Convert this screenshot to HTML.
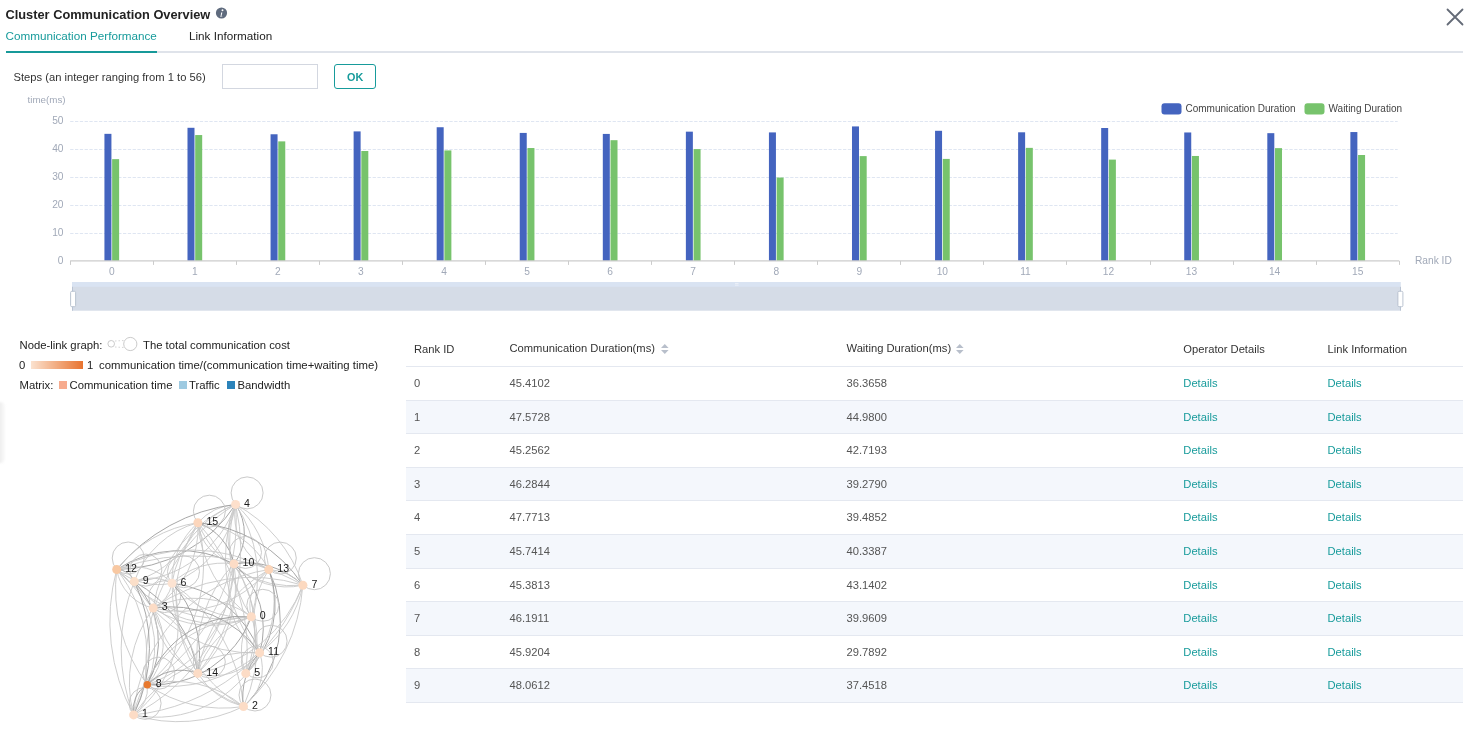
<!DOCTYPE html>
<html><head><meta charset="utf-8"><style>
html,body{margin:0;padding:0;background:#fff;}
body{width:1478px;height:740px;position:relative;overflow:hidden;font-family:'Liberation Sans', sans-serif;}
</style></head><body><div style="position:absolute;left:0;top:0;width:1478px;height:740px;will-change:transform">
<div style="position:absolute;left:5.5px;top:9px;font-size:12.8px;line-height:12.8px;color:#222;font-weight:bold;white-space:nowrap;">Cluster Communication Overview</div>
<svg style="position:absolute;left:215px;top:7px" width="13" height="13" viewBox="0 0 13 13"><circle cx="6.5" cy="6" r="5.6" fill="#5f6b7e"/><circle cx="7.5" cy="3.3" r="0.95" fill="#fff"/><path d="M6.2 5.4 L7.4 5.4 L6.5 9.0 L7.3 9.0 L7.2 9.5 L5.0 9.5 L5.1 9.0 L5.6 9.0 L6.1 6.2 L5.9 6.2 Z" fill="#fff"/></svg>
<div style="position:absolute;left:5.5px;top:30px;font-size:11.7px;line-height:11.7px;color:#179b9b;font-weight:normal;white-space:nowrap;">Communication Performance</div>
<div style="position:absolute;left:189px;top:30px;font-size:11.7px;line-height:11.7px;color:#222;font-weight:normal;white-space:nowrap;">Link Information</div>
<div style="position:absolute;left:6px;top:51px;width:1457px;height:2px;background:#dfe3ea"></div>
<div style="position:absolute;left:6px;top:51px;width:151px;height:2px;background:#179999"></div>
<svg style="position:absolute;left:1446px;top:8px" width="18" height="18" viewBox="0 0 18 18"><path d="M1.5 1.5 L16.5 16.5 M16.5 1.5 L1.5 16.5" stroke="#646b77" stroke-width="1.8" stroke-linecap="round"/></svg>
<div style="position:absolute;left:13.5px;top:72px;font-size:11.2px;line-height:11.2px;color:#333;font-weight:normal;white-space:nowrap;">Steps (an integer ranging from 1 to 56)</div>
<div style="position:absolute;left:222px;top:64px;width:94px;height:23px;border:1px solid #d3d7e0;background:#fff"></div>
<div style="position:absolute;left:334px;top:64px;width:39.5px;height:22.5px;border:1.2px solid #179b9b;border-radius:3px;background:#fff"></div>
<div style="position:absolute;left:347px;top:72px;font-size:10.8px;line-height:10.8px;color:#179b9b;font-weight:bold;white-space:nowrap;">OK</div>
<svg style="position:absolute;left:0;top:0" width="1478" height="330">
<line x1="70.2" y1="233.5" x2="1397.7" y2="233.5" stroke="#dfe6f2" stroke-width="1" stroke-dasharray="3.3,1.5"/>
<line x1="70.2" y1="205.5" x2="1397.7" y2="205.5" stroke="#dfe6f2" stroke-width="1" stroke-dasharray="3.3,1.5"/>
<line x1="70.2" y1="177.5" x2="1397.7" y2="177.5" stroke="#dfe6f2" stroke-width="1" stroke-dasharray="3.3,1.5"/>
<line x1="70.2" y1="149.5" x2="1397.7" y2="149.5" stroke="#dfe6f2" stroke-width="1" stroke-dasharray="3.3,1.5"/>
<line x1="70.2" y1="121.5" x2="1397.7" y2="121.5" stroke="#dfe6f2" stroke-width="1" stroke-dasharray="3.3,1.5"/>
<text x="63.50" y="264" text-anchor="end" font-family="Liberation Sans" font-size="10.2" font-weight="normal" fill="#a1a9b8">0</text>
<text x="63.50" y="236" text-anchor="end" font-family="Liberation Sans" font-size="10.2" font-weight="normal" fill="#a1a9b8">10</text>
<text x="63.50" y="208" text-anchor="end" font-family="Liberation Sans" font-size="10.2" font-weight="normal" fill="#a1a9b8">20</text>
<text x="63.50" y="180" text-anchor="end" font-family="Liberation Sans" font-size="10.2" font-weight="normal" fill="#a1a9b8">30</text>
<text x="63.50" y="152" text-anchor="end" font-family="Liberation Sans" font-size="10.2" font-weight="normal" fill="#a1a9b8">40</text>
<text x="63.50" y="124" text-anchor="end" font-family="Liberation Sans" font-size="10.2" font-weight="normal" fill="#a1a9b8">50</text>
<rect x="104.43" y="133.84" width="7" height="127.06" fill="#4464bf"/>
<rect x="112.13" y="159.15" width="7" height="101.75" fill="#77c36c"/>
<text x="111.73" y="275" text-anchor="middle" font-family="Liberation Sans" font-size="10.2" font-weight="normal" fill="#a1a9b8">0</text>
<rect x="187.49" y="127.79" width="7" height="133.11" fill="#4464bf"/>
<rect x="195.19" y="135.05" width="7" height="125.85" fill="#77c36c"/>
<text x="194.79" y="275" text-anchor="middle" font-family="Liberation Sans" font-size="10.2" font-weight="normal" fill="#a1a9b8">1</text>
<rect x="270.56" y="134.27" width="7" height="126.63" fill="#4464bf"/>
<rect x="278.26" y="141.37" width="7" height="119.53" fill="#77c36c"/>
<text x="277.86" y="275" text-anchor="middle" font-family="Liberation Sans" font-size="10.2" font-weight="normal" fill="#a1a9b8">2</text>
<rect x="353.62" y="131.40" width="7" height="129.50" fill="#4464bf"/>
<rect x="361.32" y="151.00" width="7" height="109.90" fill="#77c36c"/>
<text x="360.92" y="275" text-anchor="middle" font-family="Liberation Sans" font-size="10.2" font-weight="normal" fill="#a1a9b8">3</text>
<rect x="436.68" y="127.24" width="7" height="133.66" fill="#4464bf"/>
<rect x="444.38" y="150.42" width="7" height="110.48" fill="#77c36c"/>
<text x="443.98" y="275" text-anchor="middle" font-family="Liberation Sans" font-size="10.2" font-weight="normal" fill="#a1a9b8">4</text>
<rect x="519.74" y="132.92" width="7" height="127.98" fill="#4464bf"/>
<rect x="527.44" y="148.03" width="7" height="112.87" fill="#77c36c"/>
<text x="527.04" y="275" text-anchor="middle" font-family="Liberation Sans" font-size="10.2" font-weight="normal" fill="#a1a9b8">5</text>
<rect x="602.81" y="133.92" width="7" height="126.98" fill="#4464bf"/>
<rect x="610.51" y="140.19" width="7" height="120.71" fill="#77c36c"/>
<text x="610.11" y="275" text-anchor="middle" font-family="Liberation Sans" font-size="10.2" font-weight="normal" fill="#a1a9b8">6</text>
<rect x="685.87" y="131.66" width="7" height="129.24" fill="#4464bf"/>
<rect x="693.57" y="149.09" width="7" height="111.81" fill="#77c36c"/>
<text x="693.17" y="275" text-anchor="middle" font-family="Liberation Sans" font-size="10.2" font-weight="normal" fill="#a1a9b8">7</text>
<rect x="768.93" y="132.41" width="7" height="128.49" fill="#4464bf"/>
<rect x="776.63" y="177.55" width="7" height="83.35" fill="#77c36c"/>
<text x="776.23" y="275" text-anchor="middle" font-family="Liberation Sans" font-size="10.2" font-weight="normal" fill="#a1a9b8">8</text>
<rect x="851.99" y="126.42" width="7" height="134.48" fill="#4464bf"/>
<rect x="859.69" y="156.11" width="7" height="104.79" fill="#77c36c"/>
<text x="859.29" y="275" text-anchor="middle" font-family="Liberation Sans" font-size="10.2" font-weight="normal" fill="#a1a9b8">9</text>
<rect x="935.06" y="130.79" width="7" height="130.11" fill="#4464bf"/>
<rect x="942.76" y="158.91" width="7" height="101.99" fill="#77c36c"/>
<text x="942.36" y="275" text-anchor="middle" font-family="Liberation Sans" font-size="10.2" font-weight="normal" fill="#a1a9b8">10</text>
<rect x="1018.12" y="132.30" width="7" height="128.60" fill="#4464bf"/>
<rect x="1025.82" y="147.86" width="7" height="113.04" fill="#77c36c"/>
<text x="1025.42" y="275" text-anchor="middle" font-family="Liberation Sans" font-size="10.2" font-weight="normal" fill="#a1a9b8">11</text>
<rect x="1101.18" y="128.00" width="7" height="132.90" fill="#4464bf"/>
<rect x="1108.88" y="159.61" width="7" height="101.29" fill="#77c36c"/>
<text x="1108.48" y="275" text-anchor="middle" font-family="Liberation Sans" font-size="10.2" font-weight="normal" fill="#a1a9b8">12</text>
<rect x="1184.24" y="132.47" width="7" height="128.43" fill="#4464bf"/>
<rect x="1191.94" y="155.97" width="7" height="104.92" fill="#77c36c"/>
<text x="1191.54" y="275" text-anchor="middle" font-family="Liberation Sans" font-size="10.2" font-weight="normal" fill="#a1a9b8">13</text>
<rect x="1267.31" y="133.17" width="7" height="127.73" fill="#4464bf"/>
<rect x="1275.01" y="148.14" width="7" height="112.76" fill="#77c36c"/>
<text x="1274.61" y="275" text-anchor="middle" font-family="Liberation Sans" font-size="10.2" font-weight="normal" fill="#a1a9b8">14</text>
<rect x="1350.37" y="132.05" width="7" height="128.85" fill="#4464bf"/>
<rect x="1358.07" y="155.00" width="7" height="105.90" fill="#77c36c"/>
<text x="1357.67" y="275" text-anchor="middle" font-family="Liberation Sans" font-size="10.2" font-weight="normal" fill="#a1a9b8">15</text>
<line x1="70.5" y1="260.9" x2="70.5" y2="264.9" stroke="#cccccc" stroke-width="1"/>
<line x1="153.5" y1="260.9" x2="153.5" y2="264.9" stroke="#cccccc" stroke-width="1"/>
<line x1="236.5" y1="260.9" x2="236.5" y2="264.9" stroke="#cccccc" stroke-width="1"/>
<line x1="319.5" y1="260.9" x2="319.5" y2="264.9" stroke="#cccccc" stroke-width="1"/>
<line x1="402.5" y1="260.9" x2="402.5" y2="264.9" stroke="#cccccc" stroke-width="1"/>
<line x1="485.5" y1="260.9" x2="485.5" y2="264.9" stroke="#cccccc" stroke-width="1"/>
<line x1="568.5" y1="260.9" x2="568.5" y2="264.9" stroke="#cccccc" stroke-width="1"/>
<line x1="651.5" y1="260.9" x2="651.5" y2="264.9" stroke="#cccccc" stroke-width="1"/>
<line x1="734.5" y1="260.9" x2="734.5" y2="264.9" stroke="#cccccc" stroke-width="1"/>
<line x1="817.5" y1="260.9" x2="817.5" y2="264.9" stroke="#cccccc" stroke-width="1"/>
<line x1="900.5" y1="260.9" x2="900.5" y2="264.9" stroke="#cccccc" stroke-width="1"/>
<line x1="983.5" y1="260.9" x2="983.5" y2="264.9" stroke="#cccccc" stroke-width="1"/>
<line x1="1066.5" y1="260.9" x2="1066.5" y2="264.9" stroke="#cccccc" stroke-width="1"/>
<line x1="1150.5" y1="260.9" x2="1150.5" y2="264.9" stroke="#cccccc" stroke-width="1"/>
<line x1="1233.5" y1="260.9" x2="1233.5" y2="264.9" stroke="#cccccc" stroke-width="1"/>
<line x1="1316.5" y1="260.9" x2="1316.5" y2="264.9" stroke="#cccccc" stroke-width="1"/>
<line x1="1399.5" y1="260.9" x2="1399.5" y2="264.9" stroke="#cccccc" stroke-width="1"/>
<line x1="70.2" y1="260.9" x2="1399.2" y2="260.9" stroke="#cccccc" stroke-width="1.3"/>
<text x="1415.00" y="264" text-anchor="start" font-family="Liberation Sans" font-size="10.2" font-weight="normal" fill="#a1a9b8">Rank ID</text>
<text x="27.50" y="103" text-anchor="start" font-family="Liberation Sans" font-size="9.8" font-weight="normal" fill="#a1a9b8">time(ms)</text>
<rect x="1161.5" y="103.3" width="20" height="11.2" rx="3" fill="#4464bf"/>
<text x="1185.50" y="112" text-anchor="start" font-family="Liberation Sans" font-size="10" font-weight="normal" fill="#444">Communication Duration</text>
<rect x="1304.5" y="103.3" width="20" height="11.2" rx="3" fill="#77c36c"/>
<text x="1328.50" y="112" text-anchor="start" font-family="Liberation Sans" font-size="10" font-weight="normal" fill="#444">Waiting Duration</text>
<rect x="72" y="282" width="1328.5" height="28.7" fill="#d5dce7"/>
<rect x="72" y="282" width="1328.5" height="4.8" fill="#d9e3f2"/>
<rect x="72" y="286.8" width="1" height="23.9" fill="#b9c3d3"/>
<rect x="1400" y="286.8" width="1" height="23.9" fill="#b9c3d3"/>
<rect x="70.6" y="291.3" width="5" height="15.4" rx="1.2" fill="#fff" stroke="#b3bdcc" stroke-width="0.9"/>
<rect x="1397.9" y="291.3" width="5" height="15.4" rx="1.2" fill="#fff" stroke="#b3bdcc" stroke-width="0.9"/>
<path d="M735 283.6h3.5M735 285.2h3.5" stroke="#f4f7fb" stroke-width="0.7"/>
</svg>
<div style="position:absolute;left:19.5px;top:340px;font-size:11.3px;line-height:11.3px;color:#222;font-weight:normal;white-space:nowrap;">Node-link graph:</div>
<svg style="position:absolute;left:105px;top:335px" width="35" height="18"><circle cx="6.2" cy="8.8" r="3.3" fill="none" stroke="#c4c4c4" stroke-width="0.9"/><path d="M10 6 L19 5.5 M10 12 L19 12.5" stroke="#d0d0d0" stroke-width="0.9" stroke-dasharray="1.5,2"/><circle cx="25.3" cy="9" r="6.6" fill="none" stroke="#c4c4c4" stroke-width="0.9"/></svg>
<div style="position:absolute;left:143px;top:340px;font-size:11.3px;line-height:11.3px;color:#222;font-weight:normal;white-space:nowrap;">The total communication cost</div>
<div style="position:absolute;left:19px;top:360px;font-size:11.3px;line-height:11.3px;color:#222;font-weight:normal;white-space:nowrap;">0</div>
<div style="position:absolute;left:31px;top:361px;width:52px;height:8px;background:linear-gradient(90deg,#fbe2cf,#e8732f)"></div>
<div style="position:absolute;left:87px;top:360px;font-size:11.3px;line-height:11.3px;color:#222;font-weight:normal;white-space:nowrap;">1</div>
<div style="position:absolute;left:99px;top:360px;font-size:11.35px;line-height:11.35px;color:#222;font-weight:normal;white-space:nowrap;">communication time/(communication time+waiting time)</div>
<div style="position:absolute;left:19.5px;top:380px;font-size:11.3px;line-height:11.3px;color:#222;font-weight:normal;white-space:nowrap;">Matrix:</div>
<div style="position:absolute;left:59px;top:381px;width:8px;height:8px;background:#f7ab8e"></div>
<div style="position:absolute;left:69.5px;top:380px;font-size:11.3px;line-height:11.3px;color:#222;font-weight:normal;white-space:nowrap;">Communication time</div>
<div style="position:absolute;left:179px;top:381px;width:8px;height:8px;background:#9ecae1"></div>
<div style="position:absolute;left:189px;top:380px;font-size:11.3px;line-height:11.3px;color:#222;font-weight:normal;white-space:nowrap;">Traffic</div>
<div style="position:absolute;left:227px;top:381px;width:8px;height:8px;background:#2b83ba"></div>
<div style="position:absolute;left:237.5px;top:380px;font-size:11.3px;line-height:11.3px;color:#222;font-weight:normal;white-space:nowrap;">Bandwidth</div>
<div style="position:absolute;left:-4px;top:402px;width:9px;height:61px;border-radius:5px;background:linear-gradient(90deg,#e6e6e6,#f0f0f0 50%,#fbfbfb);filter:blur(0.8px)"></div>
<svg style="position:absolute;left:0;top:0" width="400" height="740">
<path d="M197.9,522.7A56.6,56.6 0 0,1 235.6,504.4" fill="none" stroke="#c8c8c8" stroke-width="0.9"/>
<path d="M235.6,504.4A142.4,142.4 0 0,1 116.7,569.5" fill="none" stroke="#9d9d9d" stroke-width="0.9"/>
<path d="M116.7,569.5A183.0,183.0 0 0,1 235.6,504.4" fill="none" stroke="#9d9d9d" stroke-width="0.9"/>
<path d="M235.6,504.4A115.1,115.1 0 0,1 134.3,581.6" fill="none" stroke="#c8c8c8" stroke-width="0.9"/>
<path d="M235.6,504.4A100.1,100.1 0 0,1 172.0,583.2" fill="none" stroke="#c8c8c8" stroke-width="0.9"/>
<path d="M172.0,583.2A100.3,100.3 0 0,1 235.6,504.4" fill="none" stroke="#c8c8c8" stroke-width="0.9"/>
<path d="M235.6,504.4A51.2,51.2 0 0,1 234.0,563.9" fill="none" stroke="#9d9d9d" stroke-width="0.9"/>
<path d="M234.0,563.9A68.3,68.3 0 0,1 235.6,504.4" fill="none" stroke="#c8c8c8" stroke-width="0.9"/>
<path d="M235.6,504.4A98.8,98.8 0 0,1 268.8,569.6" fill="none" stroke="#c8c8c8" stroke-width="0.9"/>
<path d="M268.8,569.6A60.4,60.4 0 0,1 235.6,504.4" fill="none" stroke="#c8c8c8" stroke-width="0.9"/>
<path d="M235.6,504.4A142.0,142.0 0 0,1 302.9,585.2" fill="none" stroke="#c8c8c8" stroke-width="0.9"/>
<path d="M153.2,608.1A131.0,131.0 0 0,1 235.6,504.4" fill="none" stroke="#c8c8c8" stroke-width="0.9"/>
<path d="M235.6,504.4A130.7,130.7 0 0,1 251.3,616.8" fill="none" stroke="#c8c8c8" stroke-width="0.9"/>
<path d="M251.3,616.8A132.6,132.6 0 0,1 235.6,504.4" fill="none" stroke="#c8c8c8" stroke-width="0.9"/>
<path d="M259.6,652.7A146.9,146.9 0 0,1 235.6,504.4" fill="none" stroke="#c8c8c8" stroke-width="0.9"/>
<path d="M235.6,504.4A199.4,199.4 0 0,1 197.8,673.4" fill="none" stroke="#c8c8c8" stroke-width="0.9"/>
<path d="M235.6,504.4A195.6,195.6 0 0,1 147.3,684.7" fill="none" stroke="#c8c8c8" stroke-width="0.9"/>
<path d="M147.3,684.7A184.8,184.8 0 0,1 235.6,504.4" fill="none" stroke="#c8c8c8" stroke-width="0.9"/>
<path d="M116.7,569.5A126.5,126.5 0 0,1 197.9,522.7" fill="none" stroke="#c8c8c8" stroke-width="0.9"/>
<path d="M197.9,522.7A99.0,99.0 0 0,1 134.3,581.6" fill="none" stroke="#c8c8c8" stroke-width="0.9"/>
<path d="M134.3,581.6A92.6,92.6 0 0,1 197.9,522.7" fill="none" stroke="#c8c8c8" stroke-width="0.9"/>
<path d="M172.0,583.2A78.0,78.0 0 0,1 197.9,522.7" fill="none" stroke="#c8c8c8" stroke-width="0.9"/>
<path d="M197.9,522.7A56.3,56.3 0 0,1 234.0,563.9" fill="none" stroke="#9d9d9d" stroke-width="0.9"/>
<path d="M234.0,563.9A48.4,48.4 0 0,1 197.9,522.7" fill="none" stroke="#c8c8c8" stroke-width="0.9"/>
<path d="M197.9,522.7A87.5,87.5 0 0,1 268.8,569.6" fill="none" stroke="#c8c8c8" stroke-width="0.9"/>
<path d="M197.9,522.7A139.5,139.5 0 0,1 302.9,585.2" fill="none" stroke="#9d9d9d" stroke-width="0.9"/>
<path d="M302.9,585.2A102.1,102.1 0 0,1 197.9,522.7" fill="none" stroke="#c8c8c8" stroke-width="0.9"/>
<path d="M197.9,522.7A92.9,92.9 0 0,1 153.2,608.1" fill="none" stroke="#c8c8c8" stroke-width="0.9"/>
<path d="M251.3,616.8A124.3,124.3 0 0,1 197.9,522.7" fill="none" stroke="#c8c8c8" stroke-width="0.9"/>
<path d="M197.8,673.4A140.5,140.5 0 0,1 197.9,522.7" fill="none" stroke="#c8c8c8" stroke-width="0.9"/>
<path d="M197.9,522.7A188.5,188.5 0 0,1 245.8,673.4" fill="none" stroke="#c8c8c8" stroke-width="0.9"/>
<path d="M197.9,522.7A156.8,156.8 0 0,1 147.3,684.7" fill="none" stroke="#c8c8c8" stroke-width="0.9"/>
<path d="M116.7,569.5A18.4,18.4 0 0,1 134.3,581.6" fill="none" stroke="#9d9d9d" stroke-width="0.9"/>
<path d="M116.7,569.5A52.7,52.7 0 0,1 172.0,583.2" fill="none" stroke="#c8c8c8" stroke-width="0.9"/>
<path d="M172.0,583.2A66.0,66.0 0 0,1 116.7,569.5" fill="none" stroke="#c8c8c8" stroke-width="0.9"/>
<path d="M116.7,569.5A115.6,115.6 0 0,1 234.0,563.9" fill="none" stroke="#9d9d9d" stroke-width="0.9"/>
<path d="M116.7,569.5A157.9,157.9 0 0,1 268.8,569.6" fill="none" stroke="#c8c8c8" stroke-width="0.9"/>
<path d="M116.7,569.5A219.8,219.8 0 0,1 302.9,585.2" fill="none" stroke="#c8c8c8" stroke-width="0.9"/>
<path d="M153.2,608.1A47.5,47.5 0 0,1 116.7,569.5" fill="none" stroke="#c8c8c8" stroke-width="0.9"/>
<path d="M251.3,616.8A143.9,143.9 0 0,1 116.7,569.5" fill="none" stroke="#c8c8c8" stroke-width="0.9"/>
<path d="M116.7,569.5A98.2,98.2 0 0,1 147.3,684.7" fill="none" stroke="#c8c8c8" stroke-width="0.9"/>
<path d="M147.3,684.7A160.9,160.9 0 0,1 116.7,569.5" fill="none" stroke="#c8c8c8" stroke-width="0.9"/>
<path d="M116.7,569.5A137.7,137.7 0 0,1 133.6,714.9" fill="none" stroke="#c8c8c8" stroke-width="0.9"/>
<path d="M133.6,714.9A197.6,197.6 0 0,1 116.7,569.5" fill="none" stroke="#c8c8c8" stroke-width="0.9"/>
<path d="M134.3,581.6A44.7,44.7 0 0,1 172.0,583.2" fill="none" stroke="#c8c8c8" stroke-width="0.9"/>
<path d="M251.3,616.8A99.1,99.1 0 0,1 134.3,581.6" fill="none" stroke="#c8c8c8" stroke-width="0.9"/>
<path d="M259.6,652.7A133.1,133.1 0 0,1 134.3,581.6" fill="none" stroke="#c8c8c8" stroke-width="0.9"/>
<path d="M134.3,581.6A125.2,125.2 0 0,1 197.8,673.4" fill="none" stroke="#9d9d9d" stroke-width="0.9"/>
<path d="M134.3,581.6A87.4,87.4 0 0,1 147.3,684.7" fill="none" stroke="#9d9d9d" stroke-width="0.9"/>
<path d="M134.3,581.6A151.1,151.1 0 0,1 133.6,714.9" fill="none" stroke="#9d9d9d" stroke-width="0.9"/>
<path d="M133.6,714.9A180.0,180.0 0 0,1 134.3,581.6" fill="none" stroke="#c8c8c8" stroke-width="0.9"/>
<path d="M172.0,583.2A74.9,74.9 0 0,1 234.0,563.9" fill="none" stroke="#c8c8c8" stroke-width="0.9"/>
<path d="M172.0,583.2A35.4,35.4 0 0,1 153.2,608.1" fill="none" stroke="#c8c8c8" stroke-width="0.9"/>
<path d="M251.3,616.8A91.0,91.0 0 0,1 172.0,583.2" fill="none" stroke="#c8c8c8" stroke-width="0.9"/>
<path d="M172.0,583.2A104.9,104.9 0 0,1 259.6,652.7" fill="none" stroke="#9d9d9d" stroke-width="0.9"/>
<path d="M172.0,583.2A104.8,104.8 0 0,1 197.8,673.4" fill="none" stroke="#9d9d9d" stroke-width="0.9"/>
<path d="M172.0,583.2A118.3,118.3 0 0,1 133.6,714.9" fill="none" stroke="#c8c8c8" stroke-width="0.9"/>
<path d="M172.0,583.2A164.2,164.2 0 0,1 243.5,706.5" fill="none" stroke="#c8c8c8" stroke-width="0.9"/>
<path d="M243.5,706.5A138.8,138.8 0 0,1 172.0,583.2" fill="none" stroke="#c8c8c8" stroke-width="0.9"/>
<path d="M234.0,563.9A41.3,41.3 0 0,1 268.8,569.6" fill="none" stroke="#c8c8c8" stroke-width="0.9"/>
<path d="M234.0,563.9A81.8,81.8 0 0,1 302.9,585.2" fill="none" stroke="#9d9d9d" stroke-width="0.9"/>
<path d="M302.9,585.2A72.7,72.7 0 0,1 234.0,563.9" fill="none" stroke="#c8c8c8" stroke-width="0.9"/>
<path d="M234.0,563.9A84.5,84.5 0 0,1 259.6,652.7" fill="none" stroke="#9d9d9d" stroke-width="0.9"/>
<path d="M259.6,652.7A75.6,75.6 0 0,1 234.0,563.9" fill="none" stroke="#c8c8c8" stroke-width="0.9"/>
<path d="M234.0,563.9A124.3,124.3 0 0,1 197.8,673.4" fill="none" stroke="#c8c8c8" stroke-width="0.9"/>
<path d="M197.8,673.4A133.6,133.6 0 0,1 234.0,563.9" fill="none" stroke="#c8c8c8" stroke-width="0.9"/>
<path d="M234.0,563.9A113.5,113.5 0 0,1 245.8,673.4" fill="none" stroke="#c8c8c8" stroke-width="0.9"/>
<path d="M234.0,563.9A129.2,129.2 0 0,1 147.3,684.7" fill="none" stroke="#c8c8c8" stroke-width="0.9"/>
<path d="M234.0,563.9A183.1,183.1 0 0,1 133.6,714.9" fill="none" stroke="#c8c8c8" stroke-width="0.9"/>
<path d="M234.0,563.9A149.3,149.3 0 0,1 243.5,706.5" fill="none" stroke="#c8c8c8" stroke-width="0.9"/>
<path d="M268.8,569.6A50.6,50.6 0 0,1 302.9,585.2" fill="none" stroke="#c8c8c8" stroke-width="0.9"/>
<path d="M268.8,569.6A114.6,114.6 0 0,1 153.2,608.1" fill="none" stroke="#c8c8c8" stroke-width="0.9"/>
<path d="M251.3,616.8A43.7,43.7 0 0,1 268.8,569.6" fill="none" stroke="#c8c8c8" stroke-width="0.9"/>
<path d="M268.8,569.6A97.7,97.7 0 0,1 259.6,652.7" fill="none" stroke="#c8c8c8" stroke-width="0.9"/>
<path d="M259.6,652.7A94.4,94.4 0 0,1 268.8,569.6" fill="none" stroke="#c8c8c8" stroke-width="0.9"/>
<path d="M197.8,673.4A144.0,144.0 0 0,1 268.8,569.6" fill="none" stroke="#c8c8c8" stroke-width="0.9"/>
<path d="M268.8,569.6A96.6,96.6 0 0,1 245.8,673.4" fill="none" stroke="#9d9d9d" stroke-width="0.9"/>
<path d="M133.6,714.9A158.9,158.9 0 0,1 268.8,569.6" fill="none" stroke="#c8c8c8" stroke-width="0.9"/>
<path d="M268.8,569.6A118.4,118.4 0 0,1 243.5,706.5" fill="none" stroke="#9d9d9d" stroke-width="0.9"/>
<path d="M153.2,608.1A172.9,172.9 0 0,1 302.9,585.2" fill="none" stroke="#c8c8c8" stroke-width="0.9"/>
<path d="M302.9,585.2A108.3,108.3 0 0,1 259.6,652.7" fill="none" stroke="#c8c8c8" stroke-width="0.9"/>
<path d="M302.9,585.2A142.0,142.0 0 0,1 197.8,673.4" fill="none" stroke="#c8c8c8" stroke-width="0.9"/>
<path d="M302.9,585.2A203.1,203.1 0 0,1 133.6,714.9" fill="none" stroke="#c8c8c8" stroke-width="0.9"/>
<path d="M302.9,585.2A182.3,182.3 0 0,1 243.5,706.5" fill="none" stroke="#c8c8c8" stroke-width="0.9"/>
<path d="M153.2,608.1A93.8,93.8 0 0,1 251.3,616.8" fill="none" stroke="#c8c8c8" stroke-width="0.9"/>
<path d="M251.3,616.8A103.3,103.3 0 0,1 153.2,608.1" fill="none" stroke="#c8c8c8" stroke-width="0.9"/>
<path d="M153.2,608.1A109.5,109.5 0 0,1 259.6,652.7" fill="none" stroke="#9d9d9d" stroke-width="0.9"/>
<path d="M153.2,608.1A76.6,76.6 0 0,1 197.8,673.4" fill="none" stroke="#c8c8c8" stroke-width="0.9"/>
<path d="M197.8,673.4A77.8,77.8 0 0,1 153.2,608.1" fill="none" stroke="#c8c8c8" stroke-width="0.9"/>
<path d="M153.2,608.1A63.7,63.7 0 0,1 147.3,684.7" fill="none" stroke="#c8c8c8" stroke-width="0.9"/>
<path d="M133.6,714.9A127.5,127.5 0 0,1 153.2,608.1" fill="none" stroke="#c8c8c8" stroke-width="0.9"/>
<path d="M243.5,706.5A149.1,149.1 0 0,1 153.2,608.1" fill="none" stroke="#c8c8c8" stroke-width="0.9"/>
<path d="M197.8,673.4A82.9,82.9 0 0,1 251.3,616.8" fill="none" stroke="#c8c8c8" stroke-width="0.9"/>
<path d="M251.3,616.8A63.5,63.5 0 0,1 245.8,673.4" fill="none" stroke="#c8c8c8" stroke-width="0.9"/>
<path d="M245.8,673.4A62.2,62.2 0 0,1 251.3,616.8" fill="none" stroke="#c8c8c8" stroke-width="0.9"/>
<path d="M251.3,616.8A104.5,104.5 0 0,1 147.3,684.7" fill="none" stroke="#9d9d9d" stroke-width="0.9"/>
<path d="M147.3,684.7A99.6,99.6 0 0,1 251.3,616.8" fill="none" stroke="#9d9d9d" stroke-width="0.9"/>
<path d="M133.6,714.9A125.3,125.3 0 0,1 251.3,616.8" fill="none" stroke="#c8c8c8" stroke-width="0.9"/>
<path d="M259.6,652.7A56.8,56.8 0 0,1 197.8,673.4" fill="none" stroke="#c8c8c8" stroke-width="0.9"/>
<path d="M259.6,652.7A33.6,33.6 0 0,1 245.8,673.4" fill="none" stroke="#c8c8c8" stroke-width="0.9"/>
<path d="M245.8,673.4A26.6,26.6 0 0,1 259.6,652.7" fill="none" stroke="#c8c8c8" stroke-width="0.9"/>
<path d="M259.6,652.7A137.9,137.9 0 0,1 147.3,684.7" fill="none" stroke="#c8c8c8" stroke-width="0.9"/>
<path d="M259.6,652.7A114.5,114.5 0 0,1 133.6,714.9" fill="none" stroke="#c8c8c8" stroke-width="0.9"/>
<path d="M133.6,714.9A141.2,141.2 0 0,1 259.6,652.7" fill="none" stroke="#c8c8c8" stroke-width="0.9"/>
<path d="M259.6,652.7A47.3,47.3 0 0,1 243.5,706.5" fill="none" stroke="#c8c8c8" stroke-width="0.9"/>
<path d="M243.5,706.5A65.9,65.9 0 0,1 259.6,652.7" fill="none" stroke="#9d9d9d" stroke-width="0.9"/>
<path d="M147.3,684.7A46.4,46.4 0 0,1 197.8,673.4" fill="none" stroke="#9d9d9d" stroke-width="0.9"/>
<path d="M243.5,706.5A76.2,76.2 0 0,1 197.8,673.4" fill="none" stroke="#c8c8c8" stroke-width="0.9"/>
<path d="M147.3,684.7A32.0,32.0 0 0,1 133.6,714.9" fill="none" stroke="#c8c8c8" stroke-width="0.9"/>
<path d="M133.6,714.9A28.7,28.7 0 0,1 147.3,684.7" fill="none" stroke="#9d9d9d" stroke-width="0.9"/>
<path d="M147.3,684.7A108.7,108.7 0 0,1 243.5,706.5" fill="none" stroke="#c8c8c8" stroke-width="0.9"/>
<path d="M243.5,706.5A133.2,133.2 0 0,1 147.3,684.7" fill="none" stroke="#c8c8c8" stroke-width="0.9"/>
<path d="M243.5,706.5A148.8,148.8 0 0,1 133.6,714.9" fill="none" stroke="#c8c8c8" stroke-width="0.9"/>
<circle cx="247.1" cy="492.9" r="16" fill="none" stroke="#c6c6c6" stroke-width="0.95"/>
<circle cx="209.4" cy="511.20000000000005" r="16" fill="none" stroke="#c6c6c6" stroke-width="0.95"/>
<circle cx="128.2" cy="558.0" r="16" fill="none" stroke="#c6c6c6" stroke-width="0.95"/>
<circle cx="145.8" cy="570.1" r="16" fill="none" stroke="#c6c6c6" stroke-width="0.95"/>
<circle cx="183.5" cy="571.7" r="16" fill="none" stroke="#c6c6c6" stroke-width="0.95"/>
<circle cx="245.5" cy="552.4" r="16" fill="none" stroke="#c6c6c6" stroke-width="0.95"/>
<circle cx="280.3" cy="558.1" r="16" fill="none" stroke="#c6c6c6" stroke-width="0.95"/>
<circle cx="314.4" cy="573.7" r="16" fill="none" stroke="#c6c6c6" stroke-width="0.95"/>
<circle cx="164.7" cy="596.6" r="16" fill="none" stroke="#c6c6c6" stroke-width="0.95"/>
<circle cx="262.8" cy="605.3" r="16" fill="none" stroke="#c6c6c6" stroke-width="0.95"/>
<circle cx="271.1" cy="641.2" r="16" fill="none" stroke="#c6c6c6" stroke-width="0.95"/>
<circle cx="209.3" cy="661.9" r="16" fill="none" stroke="#c6c6c6" stroke-width="0.95"/>
<circle cx="257.3" cy="661.9" r="16" fill="none" stroke="#c6c6c6" stroke-width="0.95"/>
<circle cx="158.8" cy="673.2" r="16" fill="none" stroke="#c6c6c6" stroke-width="0.95"/>
<circle cx="145.1" cy="703.4" r="16" fill="none" stroke="#c6c6c6" stroke-width="0.95"/>
<circle cx="255.0" cy="695.0" r="16" fill="none" stroke="#c6c6c6" stroke-width="0.95"/>
<circle cx="235.6" cy="504.4" r="4.5" fill="#fde0cc"/>
<text x="244.10" y="507" text-anchor="start" font-family="Liberation Sans" font-size="10.6" font-weight="normal" fill="#1a1a1a">4</text>
<circle cx="197.9" cy="522.7" r="4.5" fill="#fcd6bc"/>
<text x="206.40" y="525" text-anchor="start" font-family="Liberation Sans" font-size="10.6" font-weight="normal" fill="#1a1a1a">15</text>
<circle cx="116.7" cy="569.5" r="4.5" fill="#f8c8a2"/>
<text x="125.20" y="572" text-anchor="start" font-family="Liberation Sans" font-size="10.6" font-weight="normal" fill="#1a1a1a">12</text>
<circle cx="134.3" cy="581.6" r="4.5" fill="#fbdfc9"/>
<text x="142.80" y="584" text-anchor="start" font-family="Liberation Sans" font-size="10.6" font-weight="normal" fill="#1a1a1a">9</text>
<circle cx="172.0" cy="583.2" r="4.5" fill="#fce3d2"/>
<text x="180.50" y="586" text-anchor="start" font-family="Liberation Sans" font-size="10.6" font-weight="normal" fill="#1a1a1a">6</text>
<circle cx="234.0" cy="563.9" r="4.5" fill="#fcdcc6"/>
<text x="242.50" y="566" text-anchor="start" font-family="Liberation Sans" font-size="10.6" font-weight="normal" fill="#1a1a1a">10</text>
<circle cx="268.8" cy="569.6" r="4.5" fill="#fcd6ba"/>
<text x="277.30" y="572" text-anchor="start" font-family="Liberation Sans" font-size="10.6" font-weight="normal" fill="#1a1a1a">13</text>
<circle cx="302.9" cy="585.2" r="4.5" fill="#fcd9c0"/>
<text x="311.40" y="588" text-anchor="start" font-family="Liberation Sans" font-size="10.6" font-weight="normal" fill="#1a1a1a">7</text>
<circle cx="153.2" cy="608.1" r="4.5" fill="#fcdcc6"/>
<text x="161.70" y="610" text-anchor="start" font-family="Liberation Sans" font-size="10.6" font-weight="normal" fill="#1a1a1a">3</text>
<circle cx="251.3" cy="616.8" r="4.5" fill="#fcdcc6"/>
<text x="259.80" y="619" text-anchor="start" font-family="Liberation Sans" font-size="10.6" font-weight="normal" fill="#1a1a1a">0</text>
<circle cx="259.6" cy="652.7" r="4.5" fill="#fcdcc6"/>
<text x="268.10" y="655" text-anchor="start" font-family="Liberation Sans" font-size="10.6" font-weight="normal" fill="#1a1a1a">11</text>
<circle cx="197.8" cy="673.4" r="4.5" fill="#fcdcc6"/>
<text x="206.30" y="676" text-anchor="start" font-family="Liberation Sans" font-size="10.6" font-weight="normal" fill="#1a1a1a">14</text>
<circle cx="245.8" cy="673.4" r="4.5" fill="#fcdcc6"/>
<text x="254.30" y="676" text-anchor="start" font-family="Liberation Sans" font-size="10.6" font-weight="normal" fill="#1a1a1a">5</text>
<circle cx="147.3" cy="684.7" r="3.7" fill="#e8792f"/>
<text x="155.80" y="687" text-anchor="start" font-family="Liberation Sans" font-size="10.6" font-weight="normal" fill="#1a1a1a">8</text>
<circle cx="133.6" cy="714.9" r="4.5" fill="#fcdcc6"/>
<text x="142.10" y="717" text-anchor="start" font-family="Liberation Sans" font-size="10.6" font-weight="normal" fill="#1a1a1a">1</text>
<circle cx="243.5" cy="706.5" r="4.5" fill="#fcdcc6"/>
<text x="252.00" y="709" text-anchor="start" font-family="Liberation Sans" font-size="10.6" font-weight="normal" fill="#1a1a1a">2</text>
</svg>
<div style="position:absolute;left:406px;top:366px;width:1057px;height:1px;background:#e4e8f0"></div>
<div style="position:absolute;left:414px;top:344px;font-size:11.2px;line-height:11.2px;color:#333;font-weight:normal;white-space:nowrap;">Rank ID</div>

<div style="position:absolute;left:509.5px;top:343px;font-size:11.2px;line-height:11.2px;color:#333;font-weight:normal;white-space:nowrap;">Communication Duration(ms)</div>

<div style="position:absolute;left:846.5px;top:343px;font-size:11.2px;line-height:11.2px;color:#333;font-weight:normal;white-space:nowrap;">Waiting Duration(ms)</div>

<div style="position:absolute;left:1183.3px;top:344px;font-size:11.2px;line-height:11.2px;color:#333;font-weight:normal;white-space:nowrap;">Operator Details</div>

<div style="position:absolute;left:1327.5px;top:344px;font-size:11.2px;line-height:11.2px;color:#333;font-weight:normal;white-space:nowrap;">Link Information</div>

<svg style="position:absolute;left:661.1px;top:344px" width="8" height="10"><path d="M0 4 L3.8 0 L7.6 4 Z M0 6 L3.8 10 L7.6 6 Z" fill="#b8bfcb"/></svg>
<svg style="position:absolute;left:956.1px;top:344px" width="8" height="10"><path d="M0 4 L3.8 0 L7.6 4 Z M0 6 L3.8 10 L7.6 6 Z" fill="#b8bfcb"/></svg>
<div style="position:absolute;left:406px;top:399.60px;width:1057px;height:1px;background:#e4e8f0"></div>
<div style="position:absolute;left:414px;top:378px;font-size:11.2px;line-height:11.2px;color:#555;font-weight:normal;white-space:nowrap;">0</div>

<div style="position:absolute;left:509.5px;top:378px;font-size:11.2px;line-height:11.2px;color:#555;font-weight:normal;white-space:nowrap;">45.4102</div>

<div style="position:absolute;left:846.5px;top:378px;font-size:11.2px;line-height:11.2px;color:#555;font-weight:normal;white-space:nowrap;">36.3658</div>

<div style="position:absolute;left:1183.3px;top:378px;font-size:11.2px;line-height:11.2px;color:#179b9b;font-weight:normal;white-space:nowrap;">Details</div>

<div style="position:absolute;left:1327.5px;top:378px;font-size:11.2px;line-height:11.2px;color:#179b9b;font-weight:normal;white-space:nowrap;">Details</div>

<div style="position:absolute;left:406px;top:400.60px;width:1057px;height:32.60px;background:#f4f7fc"></div>
<div style="position:absolute;left:406px;top:433.20px;width:1057px;height:1px;background:#e4e8f0"></div>
<div style="position:absolute;left:414px;top:412px;font-size:11.2px;line-height:11.2px;color:#555;font-weight:normal;white-space:nowrap;">1</div>

<div style="position:absolute;left:509.5px;top:412px;font-size:11.2px;line-height:11.2px;color:#555;font-weight:normal;white-space:nowrap;">47.5728</div>

<div style="position:absolute;left:846.5px;top:412px;font-size:11.2px;line-height:11.2px;color:#555;font-weight:normal;white-space:nowrap;">44.9800</div>

<div style="position:absolute;left:1183.3px;top:412px;font-size:11.2px;line-height:11.2px;color:#179b9b;font-weight:normal;white-space:nowrap;">Details</div>

<div style="position:absolute;left:1327.5px;top:412px;font-size:11.2px;line-height:11.2px;color:#179b9b;font-weight:normal;white-space:nowrap;">Details</div>

<div style="position:absolute;left:406px;top:466.80px;width:1057px;height:1px;background:#e4e8f0"></div>
<div style="position:absolute;left:414px;top:445px;font-size:11.2px;line-height:11.2px;color:#555;font-weight:normal;white-space:nowrap;">2</div>

<div style="position:absolute;left:509.5px;top:445px;font-size:11.2px;line-height:11.2px;color:#555;font-weight:normal;white-space:nowrap;">45.2562</div>

<div style="position:absolute;left:846.5px;top:445px;font-size:11.2px;line-height:11.2px;color:#555;font-weight:normal;white-space:nowrap;">42.7193</div>

<div style="position:absolute;left:1183.3px;top:445px;font-size:11.2px;line-height:11.2px;color:#179b9b;font-weight:normal;white-space:nowrap;">Details</div>

<div style="position:absolute;left:1327.5px;top:445px;font-size:11.2px;line-height:11.2px;color:#179b9b;font-weight:normal;white-space:nowrap;">Details</div>

<div style="position:absolute;left:406px;top:467.80px;width:1057px;height:32.60px;background:#f4f7fc"></div>
<div style="position:absolute;left:406px;top:500.40px;width:1057px;height:1px;background:#e4e8f0"></div>
<div style="position:absolute;left:414px;top:479px;font-size:11.2px;line-height:11.2px;color:#555;font-weight:normal;white-space:nowrap;">3</div>

<div style="position:absolute;left:509.5px;top:479px;font-size:11.2px;line-height:11.2px;color:#555;font-weight:normal;white-space:nowrap;">46.2844</div>

<div style="position:absolute;left:846.5px;top:479px;font-size:11.2px;line-height:11.2px;color:#555;font-weight:normal;white-space:nowrap;">39.2790</div>

<div style="position:absolute;left:1183.3px;top:479px;font-size:11.2px;line-height:11.2px;color:#179b9b;font-weight:normal;white-space:nowrap;">Details</div>

<div style="position:absolute;left:1327.5px;top:479px;font-size:11.2px;line-height:11.2px;color:#179b9b;font-weight:normal;white-space:nowrap;">Details</div>

<div style="position:absolute;left:406px;top:534.00px;width:1057px;height:1px;background:#e4e8f0"></div>
<div style="position:absolute;left:414px;top:512px;font-size:11.2px;line-height:11.2px;color:#555;font-weight:normal;white-space:nowrap;">4</div>

<div style="position:absolute;left:509.5px;top:512px;font-size:11.2px;line-height:11.2px;color:#555;font-weight:normal;white-space:nowrap;">47.7713</div>

<div style="position:absolute;left:846.5px;top:512px;font-size:11.2px;line-height:11.2px;color:#555;font-weight:normal;white-space:nowrap;">39.4852</div>

<div style="position:absolute;left:1183.3px;top:512px;font-size:11.2px;line-height:11.2px;color:#179b9b;font-weight:normal;white-space:nowrap;">Details</div>

<div style="position:absolute;left:1327.5px;top:512px;font-size:11.2px;line-height:11.2px;color:#179b9b;font-weight:normal;white-space:nowrap;">Details</div>

<div style="position:absolute;left:406px;top:535.00px;width:1057px;height:32.60px;background:#f4f7fc"></div>
<div style="position:absolute;left:406px;top:567.60px;width:1057px;height:1px;background:#e4e8f0"></div>
<div style="position:absolute;left:414px;top:546px;font-size:11.2px;line-height:11.2px;color:#555;font-weight:normal;white-space:nowrap;">5</div>

<div style="position:absolute;left:509.5px;top:546px;font-size:11.2px;line-height:11.2px;color:#555;font-weight:normal;white-space:nowrap;">45.7414</div>

<div style="position:absolute;left:846.5px;top:546px;font-size:11.2px;line-height:11.2px;color:#555;font-weight:normal;white-space:nowrap;">40.3387</div>

<div style="position:absolute;left:1183.3px;top:546px;font-size:11.2px;line-height:11.2px;color:#179b9b;font-weight:normal;white-space:nowrap;">Details</div>

<div style="position:absolute;left:1327.5px;top:546px;font-size:11.2px;line-height:11.2px;color:#179b9b;font-weight:normal;white-space:nowrap;">Details</div>

<div style="position:absolute;left:406px;top:601.20px;width:1057px;height:1px;background:#e4e8f0"></div>
<div style="position:absolute;left:414px;top:580px;font-size:11.2px;line-height:11.2px;color:#555;font-weight:normal;white-space:nowrap;">6</div>

<div style="position:absolute;left:509.5px;top:580px;font-size:11.2px;line-height:11.2px;color:#555;font-weight:normal;white-space:nowrap;">45.3813</div>

<div style="position:absolute;left:846.5px;top:580px;font-size:11.2px;line-height:11.2px;color:#555;font-weight:normal;white-space:nowrap;">43.1402</div>

<div style="position:absolute;left:1183.3px;top:580px;font-size:11.2px;line-height:11.2px;color:#179b9b;font-weight:normal;white-space:nowrap;">Details</div>

<div style="position:absolute;left:1327.5px;top:580px;font-size:11.2px;line-height:11.2px;color:#179b9b;font-weight:normal;white-space:nowrap;">Details</div>

<div style="position:absolute;left:406px;top:602.20px;width:1057px;height:32.60px;background:#f4f7fc"></div>
<div style="position:absolute;left:406px;top:634.80px;width:1057px;height:1px;background:#e4e8f0"></div>
<div style="position:absolute;left:414px;top:613px;font-size:11.2px;line-height:11.2px;color:#555;font-weight:normal;white-space:nowrap;">7</div>

<div style="position:absolute;left:509.5px;top:613px;font-size:11.2px;line-height:11.2px;color:#555;font-weight:normal;white-space:nowrap;">46.1911</div>

<div style="position:absolute;left:846.5px;top:613px;font-size:11.2px;line-height:11.2px;color:#555;font-weight:normal;white-space:nowrap;">39.9609</div>

<div style="position:absolute;left:1183.3px;top:613px;font-size:11.2px;line-height:11.2px;color:#179b9b;font-weight:normal;white-space:nowrap;">Details</div>

<div style="position:absolute;left:1327.5px;top:613px;font-size:11.2px;line-height:11.2px;color:#179b9b;font-weight:normal;white-space:nowrap;">Details</div>

<div style="position:absolute;left:406px;top:668.40px;width:1057px;height:1px;background:#e4e8f0"></div>
<div style="position:absolute;left:414px;top:647px;font-size:11.2px;line-height:11.2px;color:#555;font-weight:normal;white-space:nowrap;">8</div>

<div style="position:absolute;left:509.5px;top:647px;font-size:11.2px;line-height:11.2px;color:#555;font-weight:normal;white-space:nowrap;">45.9204</div>

<div style="position:absolute;left:846.5px;top:647px;font-size:11.2px;line-height:11.2px;color:#555;font-weight:normal;white-space:nowrap;">29.7892</div>

<div style="position:absolute;left:1183.3px;top:647px;font-size:11.2px;line-height:11.2px;color:#179b9b;font-weight:normal;white-space:nowrap;">Details</div>

<div style="position:absolute;left:1327.5px;top:647px;font-size:11.2px;line-height:11.2px;color:#179b9b;font-weight:normal;white-space:nowrap;">Details</div>

<div style="position:absolute;left:406px;top:669.40px;width:1057px;height:32.60px;background:#f4f7fc"></div>
<div style="position:absolute;left:406px;top:702.00px;width:1057px;height:1px;background:#e4e8f0"></div>
<div style="position:absolute;left:414px;top:680px;font-size:11.2px;line-height:11.2px;color:#555;font-weight:normal;white-space:nowrap;">9</div>

<div style="position:absolute;left:509.5px;top:680px;font-size:11.2px;line-height:11.2px;color:#555;font-weight:normal;white-space:nowrap;">48.0612</div>

<div style="position:absolute;left:846.5px;top:680px;font-size:11.2px;line-height:11.2px;color:#555;font-weight:normal;white-space:nowrap;">37.4518</div>

<div style="position:absolute;left:1183.3px;top:680px;font-size:11.2px;line-height:11.2px;color:#179b9b;font-weight:normal;white-space:nowrap;">Details</div>

<div style="position:absolute;left:1327.5px;top:680px;font-size:11.2px;line-height:11.2px;color:#179b9b;font-weight:normal;white-space:nowrap;">Details</div>


</div></body></html>
